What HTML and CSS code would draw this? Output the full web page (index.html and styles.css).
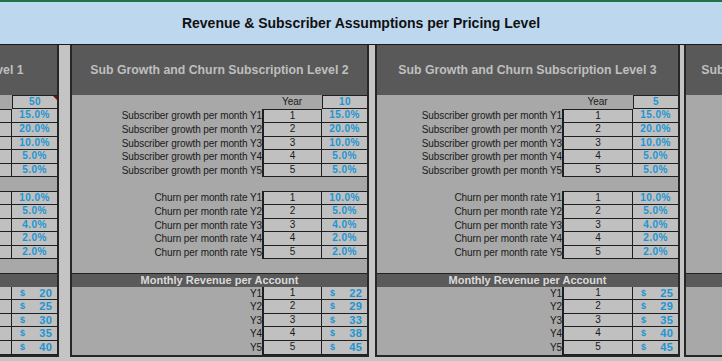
FILE: index.html
```html
<!DOCTYPE html>
<html>
<head>
<meta charset="utf-8">
<link rel="stylesheet" href="styles.css">
</head>
<body>
<div class="title">Revenue &amp; Subscriber Assumptions per Pricing Level</div>
<div class="sheet">
  <section class="panel p1">
    <header class="panel-head">Sub Growth and Churn Subscription Level 1</header>
    <div class="grid">
      <div class="lbl"></div><div class="idx plain">Year</div><div class="val box comment">50</div>
      <div class="lbl">Subscriber growth per month Y1</div><div class="idx top">1</div><div class="val">15.0%</div>
      <div class="lbl">Subscriber growth per month Y2</div><div class="idx">2</div><div class="val">20.0%</div>
      <div class="lbl">Subscriber growth per month Y3</div><div class="idx">3</div><div class="val">10.0%</div>
      <div class="lbl">Subscriber growth per month Y4</div><div class="idx">4</div><div class="val">5.0%</div>
      <div class="lbl">Subscriber growth per month Y5</div><div class="idx">5</div><div class="val">5.0%</div>
      <div class="blank"></div>
      <div class="lbl">Churn per month rate Y1</div><div class="idx top">1</div><div class="val top">10.0%</div>
      <div class="lbl">Churn per month rate Y2</div><div class="idx">2</div><div class="val">5.0%</div>
      <div class="lbl">Churn per month rate Y3</div><div class="idx">3</div><div class="val">4.0%</div>
      <div class="lbl">Churn per month rate Y4</div><div class="idx">4</div><div class="val">2.0%</div>
      <div class="lbl">Churn per month rate Y5</div><div class="idx">5</div><div class="val">2.0%</div>
      <div class="blank"></div>
      <div class="band">Monthly Revenue per Account</div>
      <div class="lbl">Y1</div><div class="idx">1</div><div class="val money"><span>$</span><span>20</span></div>
      <div class="lbl">Y2</div><div class="idx">2</div><div class="val money"><span>$</span><span>25</span></div>
      <div class="lbl">Y3</div><div class="idx">3</div><div class="val money"><span>$</span><span>30</span></div>
      <div class="lbl">Y4</div><div class="idx">4</div><div class="val money"><span>$</span><span>35</span></div>
      <div class="lbl">Y5</div><div class="idx">5</div><div class="val money"><span>$</span><span>40</span></div>
    </div>
  </section>

  <section class="panel p2">
    <header class="panel-head">Sub Growth and Churn Subscription Level 2</header>
    <div class="grid">
      <div class="lbl"></div><div class="idx plain">Year</div><div class="val box">10</div>
      <div class="lbl">Subscriber growth per month Y1</div><div class="idx top">1</div><div class="val">15.0%</div>
      <div class="lbl">Subscriber growth per month Y2</div><div class="idx">2</div><div class="val">20.0%</div>
      <div class="lbl">Subscriber growth per month Y3</div><div class="idx">3</div><div class="val">10.0%</div>
      <div class="lbl">Subscriber growth per month Y4</div><div class="idx">4</div><div class="val">5.0%</div>
      <div class="lbl">Subscriber growth per month Y5</div><div class="idx">5</div><div class="val">5.0%</div>
      <div class="blank"></div>
      <div class="lbl">Churn per month rate Y1</div><div class="idx top">1</div><div class="val top">10.0%</div>
      <div class="lbl">Churn per month rate Y2</div><div class="idx">2</div><div class="val">5.0%</div>
      <div class="lbl">Churn per month rate Y3</div><div class="idx">3</div><div class="val">4.0%</div>
      <div class="lbl">Churn per month rate Y4</div><div class="idx">4</div><div class="val">2.0%</div>
      <div class="lbl">Churn per month rate Y5</div><div class="idx">5</div><div class="val">2.0%</div>
      <div class="blank"></div>
      <div class="band">Monthly Revenue per Account</div>
      <div class="lbl">Y1</div><div class="idx">1</div><div class="val money"><span>$</span><span>22</span></div>
      <div class="lbl">Y2</div><div class="idx">2</div><div class="val money"><span>$</span><span>29</span></div>
      <div class="lbl">Y3</div><div class="idx">3</div><div class="val money"><span>$</span><span>33</span></div>
      <div class="lbl">Y4</div><div class="idx">4</div><div class="val money"><span>$</span><span>38</span></div>
      <div class="lbl">Y5</div><div class="idx">5</div><div class="val money"><span>$</span><span>45</span></div>
    </div>
  </section>

  <section class="panel p3">
    <header class="panel-head">Sub Growth and Churn Subscription Level 3</header>
    <div class="grid">
      <div class="lbl"></div><div class="idx plain">Year</div><div class="val box">5</div>
      <div class="lbl">Subscriber growth per month Y1</div><div class="idx top">1</div><div class="val">15.0%</div>
      <div class="lbl">Subscriber growth per month Y2</div><div class="idx">2</div><div class="val">20.0%</div>
      <div class="lbl">Subscriber growth per month Y3</div><div class="idx">3</div><div class="val">10.0%</div>
      <div class="lbl">Subscriber growth per month Y4</div><div class="idx">4</div><div class="val">5.0%</div>
      <div class="lbl">Subscriber growth per month Y5</div><div class="idx">5</div><div class="val">5.0%</div>
      <div class="blank"></div>
      <div class="lbl">Churn per month rate Y1</div><div class="idx top">1</div><div class="val top">10.0%</div>
      <div class="lbl">Churn per month rate Y2</div><div class="idx">2</div><div class="val">5.0%</div>
      <div class="lbl">Churn per month rate Y3</div><div class="idx">3</div><div class="val">4.0%</div>
      <div class="lbl">Churn per month rate Y4</div><div class="idx">4</div><div class="val">2.0%</div>
      <div class="lbl">Churn per month rate Y5</div><div class="idx">5</div><div class="val">2.0%</div>
      <div class="blank"></div>
      <div class="band">Monthly Revenue per Account</div>
      <div class="lbl">Y1</div><div class="idx">1</div><div class="val money"><span>$</span><span>25</span></div>
      <div class="lbl">Y2</div><div class="idx">2</div><div class="val money"><span>$</span><span>29</span></div>
      <div class="lbl">Y3</div><div class="idx">3</div><div class="val money"><span>$</span><span>35</span></div>
      <div class="lbl">Y4</div><div class="idx">4</div><div class="val money"><span>$</span><span>40</span></div>
      <div class="lbl">Y5</div><div class="idx">5</div><div class="val money"><span>$</span><span>45</span></div>
    </div>
  </section>

  <section class="panel p4">
    <header class="panel-head">Sub Growth and Churn Subscription Level 4</header>
    <div class="grid">
      <div class="blank tall-a"></div>
      <div class="band">Monthly Revenue per Account</div>
      <div class="blank tall-b"></div>
    </div>
  </section>
</div>
</body>
</html>
```

FILE: styles.css
```css
* { box-sizing: border-box; }
html, body { margin: 0; padding: 0; }
body {
  width: 722px;
  height: 361px;
  overflow: hidden;
  background: #c4c4c4;
  font-family: "Liberation Sans", Arial, sans-serif;
}
.title {
  height: 45px;
  border-top: 2px solid #217346;
  border-bottom: 1px solid #1a1a1a;
  background: #bdd7ee;
  display: flex;
  align-items: center;
  justify-content: center;
  font-weight: bold;
  font-size: 14px;
  color: #111;
}
.sheet {
  display: flex;
  margin-left: -270px;
  align-items: flex-start;
}
.panel {
  flex: none;
  border-left: 2px solid #262626;
  border-right: 2px solid #262626;
  border-bottom: 2px solid #262626;
  background: #a8a8a8;
}
.p1 { width: 329px; --idx: 60px; }
.p2 { width: 299px; margin-left: 11px; --idx: 60px; }
.p3 { width: 305px; margin-left: 6px; --idx: 71px; }
.p4 { width: 293px; margin-left: 4px; --idx: 60px; }
.panel-head {
  height: 50px;
  background: #595959;
  color: #bfbfbf;
  font-weight: bold;
  font-size: 12.3px;
  display: flex;
  align-items: center;
  justify-content: center;
  white-space: nowrap;
}
.grid {
  display: grid;
  grid-template-columns: 1fr var(--idx) 45px;
  grid-template-rows: 14px 14px 14px 13px 14px 13px 14px 14px 14px 13px 14px 13px 14px 14px 13px 14px 13px 14px 14px;
  font-size: 10px;
  color: #1a1a1a;
}
.lbl {
  text-align: right;
  white-space: nowrap;
  line-height: 13px;
  letter-spacing: -0.1px;
}
.idx {
  background: #c0c0c0;
  border-left: 2px solid #1f1f1f;
  border-right: 1px solid #1f1f1f;
  border-bottom: 1px solid #1f1f1f;
  text-align: center;
  line-height: 12px;
}
.idx.top { border-top: 1px solid #1f1f1f; }
.idx.plain {
  background: transparent;
  border: none;
  line-height: 14px;
}
.val {
  background: #c0c0c0;
  border-bottom: 1px solid #1f1f1f;
  color: #1c95d2;
  font-weight: bold;
  text-align: center;
  line-height: 12px;
  letter-spacing: 0.4px;
  position: relative;
}
.val.top { border-top: 1px solid #1f1f1f; }
.val.box {
  border-top: 1px solid #1f1f1f;
  border-left: 1px solid #1f1f1f;
  line-height: 12px;
}
.val.comment::after {
  content: "";
  position: absolute;
  top: 0;
  right: 0;
  border-top: 4px solid #7a1010;
  border-left: 4px solid transparent;
}
.val.money {
  display: flex;
  justify-content: space-between;
  padding: 0 5px 0 8px;
  font-size: 11px;
  letter-spacing: 0.2px;
}
.val.money span:first-child { font-size: 9px; }
.blank { grid-column: 1 / -1; }
.band {
  grid-column: 1 / -1;
  background: #5a5a5a;
  border-top: 1px solid #222;
  color: #dadada;
  font-weight: bold;
  font-size: 11px;
  line-height: 13px;
  text-align: center;
  white-space: nowrap;
}
.tall-a { grid-row: 1 / 14; }
.tall-b { grid-row: 15 / 20; }
```
